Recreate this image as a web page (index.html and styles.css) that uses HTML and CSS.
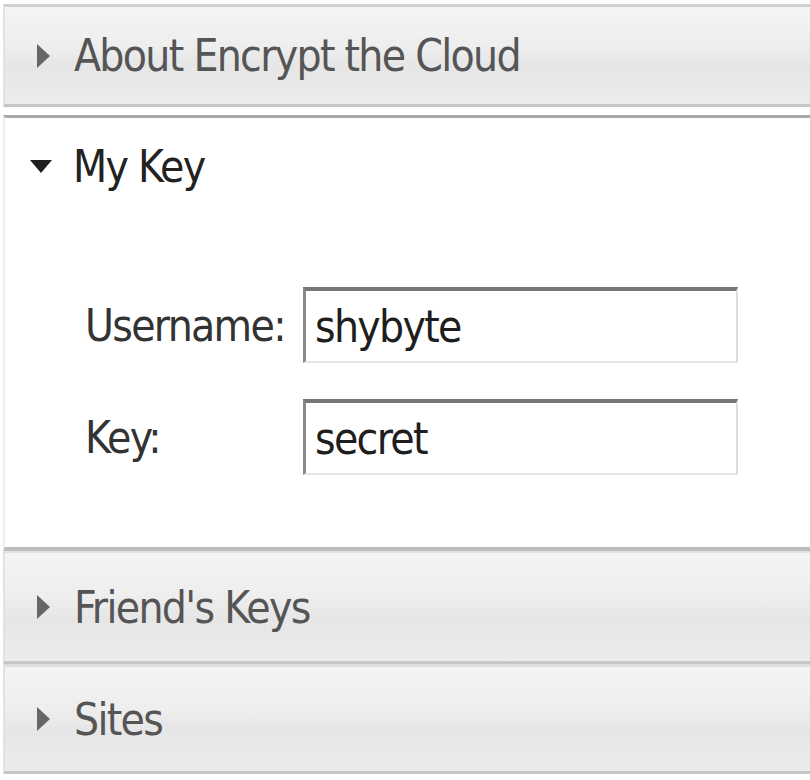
FILE: index.html
```html
<!DOCTYPE html>
<html>
<head>
<meta charset="utf-8">
<title>Encrypt the Cloud</title>
<link rel="stylesheet" href="styles.css">
</head>
<body>
<div class="accordion">
  <div class="header collapsed first">
    <span class="arrow-right"></span>
    <span class="title">About Encrypt the Cloud</span>
  </div>
  <div class="header active">
    <span class="arrow-down"></span>
    <span class="title">My Key</span>
  </div>
  <div class="panel">
    <div class="row">
      <label class="label">Username:</label>
      <div class="field">shybyte</div>
    </div>
    <div class="row">
      <label class="label">Key:</label>
      <div class="field">secret</div>
    </div>
  </div>
  <div class="header collapsed third">
    <span class="arrow-right"></span>
    <span class="title">Friend's Keys</span>
  </div>
  <div class="header collapsed last">
    <span class="arrow-right"></span>
    <span class="title">Sites</span>
  </div>
</div>
</body>
</html>
```
FILE: styles.css
```css
html, body {
  margin: 0;
  padding: 0;
  background: #ffffff;
}
body {
  font-family: "DejaVu Sans Condensed", "DejaVu Sans", sans-serif;
  font-stretch: condensed;
  font-size: 44px;
  letter-spacing: -1.7px;
}
.accordion {
  padding-top: 4px;
  padding-left: 3px;
}
.header {
  display: flex;
  align-items: center;
  height: 97px;
  box-sizing: content-box;
  border-left: 2px solid #e2e2e2;
}
.collapsed {
  background: linear-gradient(#f4f4f4 0%, #eeeeee 40%, #e6e6e6 60%, #ececec 100%);
  color: #555555;
  border-top: 3px solid #cfcfcf;
  border-bottom: 3px solid #c6c6c6;
}
.first {
  margin-bottom: 8px;
}
.third {
  height: 108px;
  border-top: 2px solid #e2e2e2;
}
.last {
  height: 104px;
  border-top: 3px solid #dedede;
}
.active {
  background: #ffffff;
  color: #222222;
  border-top: 3px solid #a9a9a9;
  border-left: 2px solid #eeeeee;
}
.arrow-right {
  width: 0;
  height: 0;
  margin-left: 32px;
  margin-right: 24px;
  border-top: 12px solid transparent;
  border-bottom: 12px solid transparent;
  border-left: 13px solid #666666;
}
.arrow-down {
  width: 0;
  height: 0;
  margin-left: 25px;
  margin-right: 21px;
  border-left: 11px solid transparent;
  border-right: 11px solid transparent;
  border-top: 13px solid #1e1e1e;
}
.panel {
  border-left: 2px solid #eeeeee;
  border-bottom: 4px solid #bdbdbd;
  padding: 72px 0 72px 80px;
  display: flex;
  flex-direction: column;
  gap: 36px;
}
.row {
  display: flex;
  align-items: center;
}
.label {
  width: 218px;
  color: #333333;
}
.field {
  width: 421px;
  height: 70px;
  display: flex;
  align-items: center;
  padding-left: 9px;
  border-top: 4px solid #777777;
  border-left: 3px solid #8a8a8a;
  border-right: 2px solid #dedede;
  border-bottom: 2px solid #e6e6e6;
  color: #1e1e1e;
  background: #ffffff;
}
```
